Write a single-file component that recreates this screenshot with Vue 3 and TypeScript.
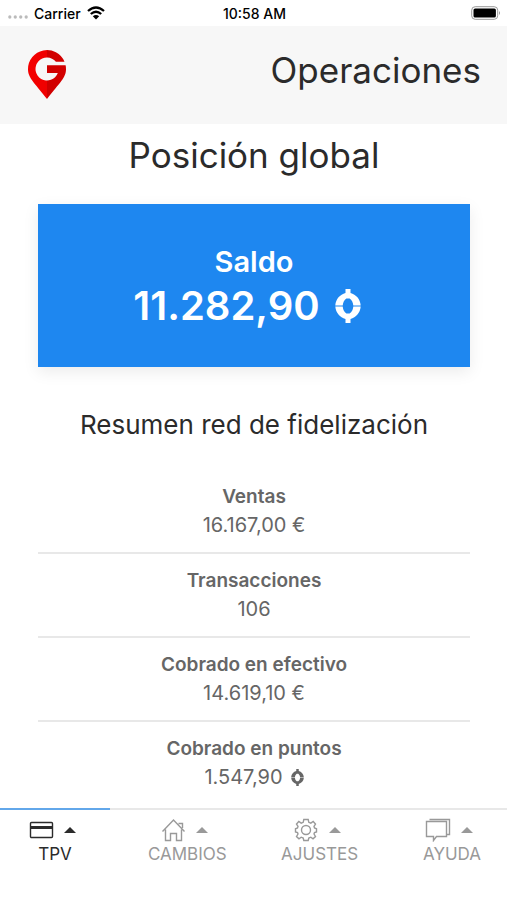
<script setup lang="ts">
interface Row { label: string; value: string; coin?: boolean }
interface Tab { id: string; label: string }

const rows: Row[] = [
  { label: 'Ventas', value: '16.167,00 €' },
  { label: 'Transacciones', value: '106' },
  { label: 'Cobrado en efectivo', value: '14.619,10 €' },
  { label: 'Cobrado en puntos', value: '1.547,90', coin: true },
]

const tabs: Tab[] = [
  { id: 'tpv', label: 'TPV' },
  { id: 'cambios', label: 'CAMBIOS' },
  { id: 'ajustes', label: 'AJUSTES' },
  { id: 'ayuda', label: 'AYUDA' },
]
const active = 'tpv'

const coinPath =
  'M10.5 0 H15.5 V4 C21 5.5 25.2 10 25.7 16.4 H18.3 Q17.8 11.6 14.6 9.4 H11.4 Q8.2 11.6 7.7 16.4 H0.3 C0.8 10 5 5.5 10.5 4 Z ' +
  'M10.5 34 H15.5 V30 C21 28.5 25.2 24 25.7 17.6 H18.3 Q17.8 22.4 14.6 24.6 H11.4 Q8.2 22.4 7.7 17.6 H0.3 C0.8 24 5 28.5 10.5 30 Z'
</script>

<template>
  <div class="app">
    <div class="status">
      <div class="carrier">
        <svg class="signal" viewBox="0 0 22 4" aria-hidden="true">
          <circle cx="2" cy="2" r="1.8" /><circle cx="8" cy="2" r="1.8" /><circle cx="14" cy="2" r="1.8" /><circle cx="20" cy="2" r="1.8" />
        </svg>
        <span>Carrier</span>
        <svg class="wifi" viewBox="0 0 18 14" aria-hidden="true">
          <path d="M1 5 Q9 -2 17 5 M3.8 8 Q9 3.4 14.2 8" fill="none" stroke="#000" stroke-width="2.3" />
          <path d="M9 13.6 L5.8 10.3 Q9 7.6 12.2 10.3 Z" />
        </svg>
      </div>
      <span>10:58 AM</span>
      <svg class="battery" viewBox="0 0 30 14" aria-hidden="true">
        <rect x="0.7" y="0.7" width="26" height="12.6" rx="3.5" fill="none" stroke="#999" />
        <rect x="2.5" y="2.5" width="22.4" height="9" rx="1.6" />
        <path d="M28 5 Q30 7 28 9 Z" fill="#999" />
      </svg>
    </div>

    <header class="header">
      <svg class="logo" viewBox="0 0 38 49" role="img" aria-label="G">
        <defs>
          <linearGradient id="pin">
            <stop offset="0" stop-color="#f40000" />
            <stop offset="0.5" stop-color="#f00000" />
            <stop offset="0.5" stop-color="#cf0000" />
            <stop offset="1" stop-color="#d40000" />
          </linearGradient>
        </defs>
        <path fill="url(#pin)" d="M36.5 11.7 A19 19 0 0 0 0 19 C0 28 6 32 19 49 C32 32 38 28 38 19 Q38 17 37.6 15.3 H19 V23 H29.8 A11.5 11.5 0 1 1 27.9 11.7 Z" />
      </svg>
      <h1>Operaciones</h1>
    </header>

    <main class="content">
      <h2>Posición global</h2>
      <section class="card">
        <h3>Saldo</h3>
        <p class="balance">
          11.282,90
          <svg class="coin" viewBox="0 0 26 34" aria-hidden="true"><path :d="coinPath" /></svg>
        </p>
      </section>
      <h4>Resumen red de fidelización</h4>
      <dl class="rows">
        <div v-for="row in rows" :key="row.label" class="row">
          <dt>{{ row.label }}</dt>
          <dd>
            {{ row.value }}
            <svg v-if="row.coin" class="coin small" viewBox="0 0 26 34" aria-hidden="true"><path :d="coinPath" /></svg>
          </dd>
        </div>
      </dl>
    </main>

    <nav class="tabs">
      <button v-for="tab in tabs" :key="tab.id" type="button" class="tab" :class="{ active: tab.id === active }">
        <span class="icons">
          <svg class="icon" viewBox="0 0 26 24" aria-hidden="true">
            <g v-if="tab.id === 'tpv'">
              <rect x="2.5" y="4.5" width="22" height="15" rx="1" />
              <path d="M2.5 9.5 H24.5" stroke-width="3" />
            </g>
            <path v-else-if="tab.id === 'cambios'" d="M2.5 13.5 L13.5 2 L24.5 13.5 M5.5 11.5 V22.5 H10.5 V15.5 H16.5 V22.5 H21.5 V11.5 M18.5 5.5 H22.5 V10" />
            <g v-else-if="tab.id === 'ajustes'">
              <circle cx="13" cy="12" r="4.5" />
              <path d="M10.8 1.5 H15.2 L15.8 4.3 L17.8 5.1 L20.2 3.5 L22.5 6 L21 8.4 L21.5 10 L23.5 10.8 V14 L21.5 14.6 L21 16 L22.5 18.5 L20 20.8 L17.8 19.2 L15.8 20 L15.2 22.5 H10.8 L10.2 20 L8.2 19.2 L6 20.8 L3.5 18.5 L5 16 L4.5 14.6 L2.5 14 V10.8 L4.5 10 L5 8.4 L3.5 6 L5.8 3.5 L8.2 5.1 L10.2 4.3 Z" />
            </g>
            <path v-else d="M1.5 3.5 H21.5 V18.5 H11.5 L8.5 22.5 V18.5 H1.5 Z M4.5 1.5 H24.5 V16.5 H21.5" />
          </svg>
          <svg class="caret" viewBox="0 0 12 6" aria-hidden="true"><path d="M0 6 L6 0 L12 6 Z" /></svg>
        </span>
        <span>{{ tab.label }}</span>
      </button>
    </nav>
  </div>
</template>

<style>
body {
  margin: 0;
  background: #fff;
}
</style>

<style scoped>
.app {
  display: flex;
  flex-direction: column;
  height: 100vh;
  font-family: Inter, "Liberation Sans", sans-serif;
  color: #2b2b2b;
}
h1, h2, h3, h4, p, dl, dd {
  margin: 0;
  font-weight: 400;
}
.status {
  display: grid;
  grid-template-columns: 1fr auto 1fr;
  align-items: center;
  flex: none;
  height: 26px;
  padding: 0 6px 0 8px;
  font-size: 14px;
  font-weight: 500;
  color: #000;
}
.carrier {
  display: flex;
  align-items: center;
  gap: 6px;
}
.signal {
  width: 20px;
  height: 4px;
  margin-top: 8px;
  fill: #bbb;
}
.wifi {
  width: 18px;
  height: 14px;
}
.battery {
  width: 30px;
  height: 14px;
  justify-self: end;
}
.header {
  display: flex;
  align-items: center;
  justify-content: space-between;
  flex: none;
  height: 98px;
  box-sizing: border-box;
  padding: 0 26px 2px 28px;
  background: #f7f7f7;
}
.logo {
  width: 38px;
  height: 49px;
}
h1, h2 {
  font-size: 35px;
  line-height: 48px;
}
h1 {
  padding-bottom: 8px;
}
.content {
  flex: 1;
  min-height: 0;
  overflow: hidden;
  padding: 7px 37px 0 38px;
  text-align: center;
}
.card {
  margin-top: 25px;
  padding: 39px 16px 35px;
  background: #1e87f0;
  box-shadow: 0 5px 15px rgba(0, 0, 0, 0.08);
  color: #fff;
}
h3 {
  font-size: 29px;
  font-weight: 600;
  line-height: 37px;
}
.balance {
  display: flex;
  align-items: center;
  justify-content: center;
  gap: 15px;
  padding-right: 14px;
  font-size: 40px;
  font-weight: 600;
  line-height: 52px;
}
.coin {
  width: 26px;
  height: 34px;
  fill: currentColor;
}
.coin.small {
  width: 13px;
  height: 17px;
}
h4 {
  margin-top: 40px;
  font-size: 26px;
  line-height: 36px;
}
.rows {
  margin-top: 27px;
}
.row {
  padding: 12px 0;
  font-size: 19px;
  line-height: 29px;
  color: #666;
}
.row + .row {
  border-top: 2px solid #e8e8e8;
}
dt {
  font-weight: 600;
}
dd {
  display: flex;
  align-items: center;
  justify-content: center;
  gap: 8px;
  font-size: 20px;
}
.tabs {
  display: flex;
  justify-content: space-between;
  flex: none;
  height: 92px;
  box-sizing: border-box;
  border-top: 2px solid #e8e8e8;
  background: #fff;
}
.tab {
  display: flex;
  flex-direction: column;
  align-items: center;
  width: 110px;
  margin: -2px 0 0;
  padding: 8px 0 0;
  border: 0;
  border-top: 2px solid transparent;
  background: none;
  font: inherit;
  font-size: 17px;
  line-height: 24px;
  color: #999;
}
.tab.active {
  border-top-color: #62a7ea;
  color: #2b2b2b;
}
.icons {
  display: flex;
  align-items: center;
  gap: 10px;
  padding-right: 6px;
}
.icon {
  width: 26px;
  height: 24px;
  fill: none;
  stroke: currentColor;
  stroke-width: 1.4;
}
.caret {
  width: 12px;
  height: 6px;
  fill: currentColor;
}
</style>
